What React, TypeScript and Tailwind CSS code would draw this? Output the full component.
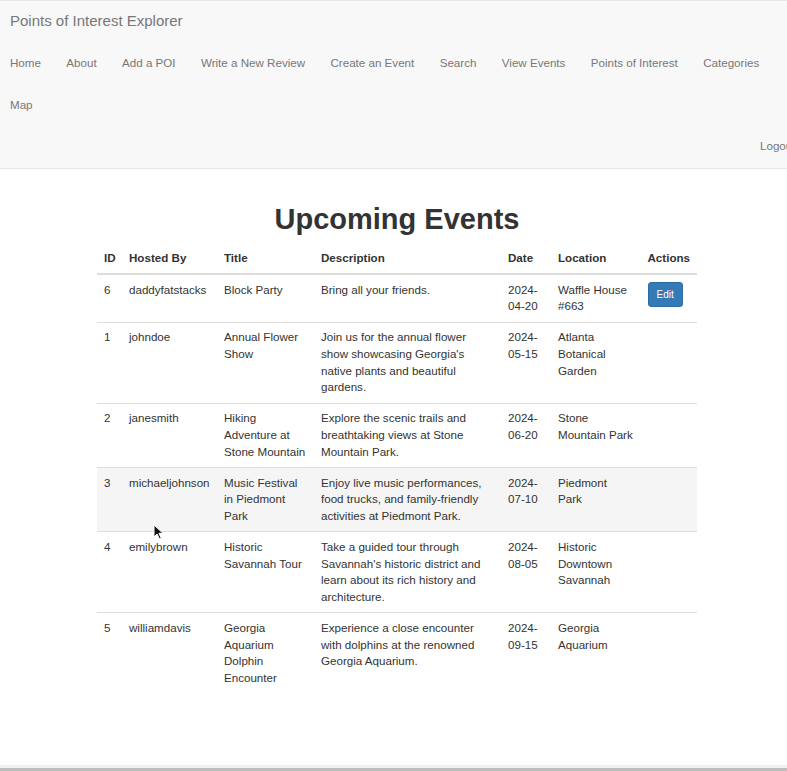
import React from "react";

type Ev = {
  id: string;
  host: string;
  title: string;
  desc: string;
  date: string;
  loc: string;
  edit?: boolean;
  hover?: boolean;
};

const events: Ev[] = [
  { id: "6", host: "daddyfatstacks", title: "Block Party", desc: "Bring all your friends.", date: "2024-04-20", loc: "Waffle House #663", edit: true },
  { id: "1", host: "johndoe", title: "Annual Flower Show", desc: "Join us for the annual flower show showcasing Georgia's native plants and beautiful gardens.", date: "2024-05-15", loc: "Atlanta Botanical Garden" },
  { id: "2", host: "janesmith", title: "Hiking Adventure at Stone Mountain", desc: "Explore the scenic trails and breathtaking views at Stone Mountain Park.", date: "2024-06-20", loc: "Stone Mountain Park" },
  { id: "3", host: "michaeljohnson", title: "Music Festival in Piedmont Park", desc: "Enjoy live music performances, food trucks, and family-friendly activities at Piedmont Park.", date: "2024-07-10", loc: "Piedmont Park", hover: true },
  { id: "4", host: "emilybrown", title: "Historic Savannah Tour", desc: "Take a guided tour through Savannah's historic district and learn about its rich history and architecture.", date: "2024-08-05", loc: "Historic Downtown Savannah" },
  { id: "5", host: "williamdavis", title: "Georgia Aquarium Dolphin Encounter", desc: "Experience a close encounter with dolphins at the renowned Georgia Aquarium.", date: "2024-09-15", loc: "Georgia Aquarium" },
];

const navLinks = ["Home", "About", "Add a POI", "Write a New Review", "Create an Event", "Search", "View Events", "Points of Interest", "Categories"];

export default function App() {
  const th = "text-left align-bottom font-bold px-[7px] py-[6.67px] border-b-2 border-[#ddd] whitespace-nowrap";
  const td = "align-top px-[7px] py-[6.67px] border-t border-[#ddd]";
  return (
    <div
      className="relative h-[771px] w-full overflow-hidden flex flex-col bg-white text-[#333] text-[11.6px] leading-[16.67px]"
      style={{ fontFamily: '"Liberation Sans", Arial, Helvetica, sans-serif' }}
    >
      {/* Navbar */}
      <nav className="bg-[#f8f8f8] border-t border-b border-[#e7e7e7] text-[#777] shrink-0">
        <div className="h-[41.67px] flex items-center pl-[10px] text-[15px]">Points of Interest Explorer</div>
        <div className="h-[41.67px] flex items-center pl-[10px] gap-[25.4px] whitespace-nowrap">
          {navLinks.map((l) => (
            <span key={l}>{l}</span>
          ))}
        </div>
        <div className="h-[41.67px] flex items-center pl-[10px]">Map</div>
        <div className="h-[41.67px] flex items-center pl-[760px] whitespace-nowrap">Logout</div>
      </nav>

      {/* Content */}
      <main className="flex-1 flex flex-col items-center pl-[7px]">
        <h1 className="mt-[34px] mb-[8.3px] text-[29px] leading-[32px] font-bold text-[#333]">Upcoming Events</h1>
        <table className="w-[600px] table-fixed border-collapse">
          <colgroup>
            <col className="w-[25px]" />
            <col className="w-[95px]" />
            <col className="w-[97px]" />
            <col className="w-[187px]" />
            <col className="w-[50px]" />
            <col className="w-[89.5px]" />
            <col className="w-[56.5px]" />
          </colgroup>
          <thead>
            <tr>
              <th className={th}>ID</th>
              <th className={th}>Hosted By</th>
              <th className={th}>Title</th>
              <th className={th}>Description</th>
              <th className={th}>Date</th>
              <th className={th}>Location</th>
              <th className={th}>Actions</th>
            </tr>
          </thead>
          <tbody>
            {events.map((e) => (
              <tr key={e.id} className={e.hover ? "bg-[#f5f5f5]" : ""}>
                <td className={td}>{e.id}</td>
                <td className={td + " whitespace-nowrap"}>{e.host}</td>
                <td className={td}>{e.title}</td>
                <td className={td}>{e.desc}</td>
                <td className={td}>{e.date}</td>
                <td className={td}>{e.loc}</td>
                <td className={td}>
                  {e.edit && (
                    <button className="h-[25px] px-[8px] text-[10px] leading-[23px] text-white bg-[#337ab7] border border-[#2e6da4] rounded-[3px]">
                      Edit
                    </button>
                  )}
                </td>
              </tr>
            ))}
          </tbody>
        </table>
      </main>

      {/* bottom window edge */}
      <div className="h-[3px] bg-[#f0f0f0] shrink-0" />
      <div className="h-[3px] bg-[#bdbdbd] shrink-0" />

      {/* mouse cursor overlay */}
      <svg className="absolute left-[153px] top-[524px]" width="11" height="16" viewBox="0 0 11 16">
        <path d="M1 1 L1 13 L4 10 L6.5 15 L8.3 14.2 L5.9 9.3 L10 9.3 Z" fill="#111" stroke="#fff" strokeWidth="1" strokeLinejoin="round" />
      </svg>
    </div>
  );
}
